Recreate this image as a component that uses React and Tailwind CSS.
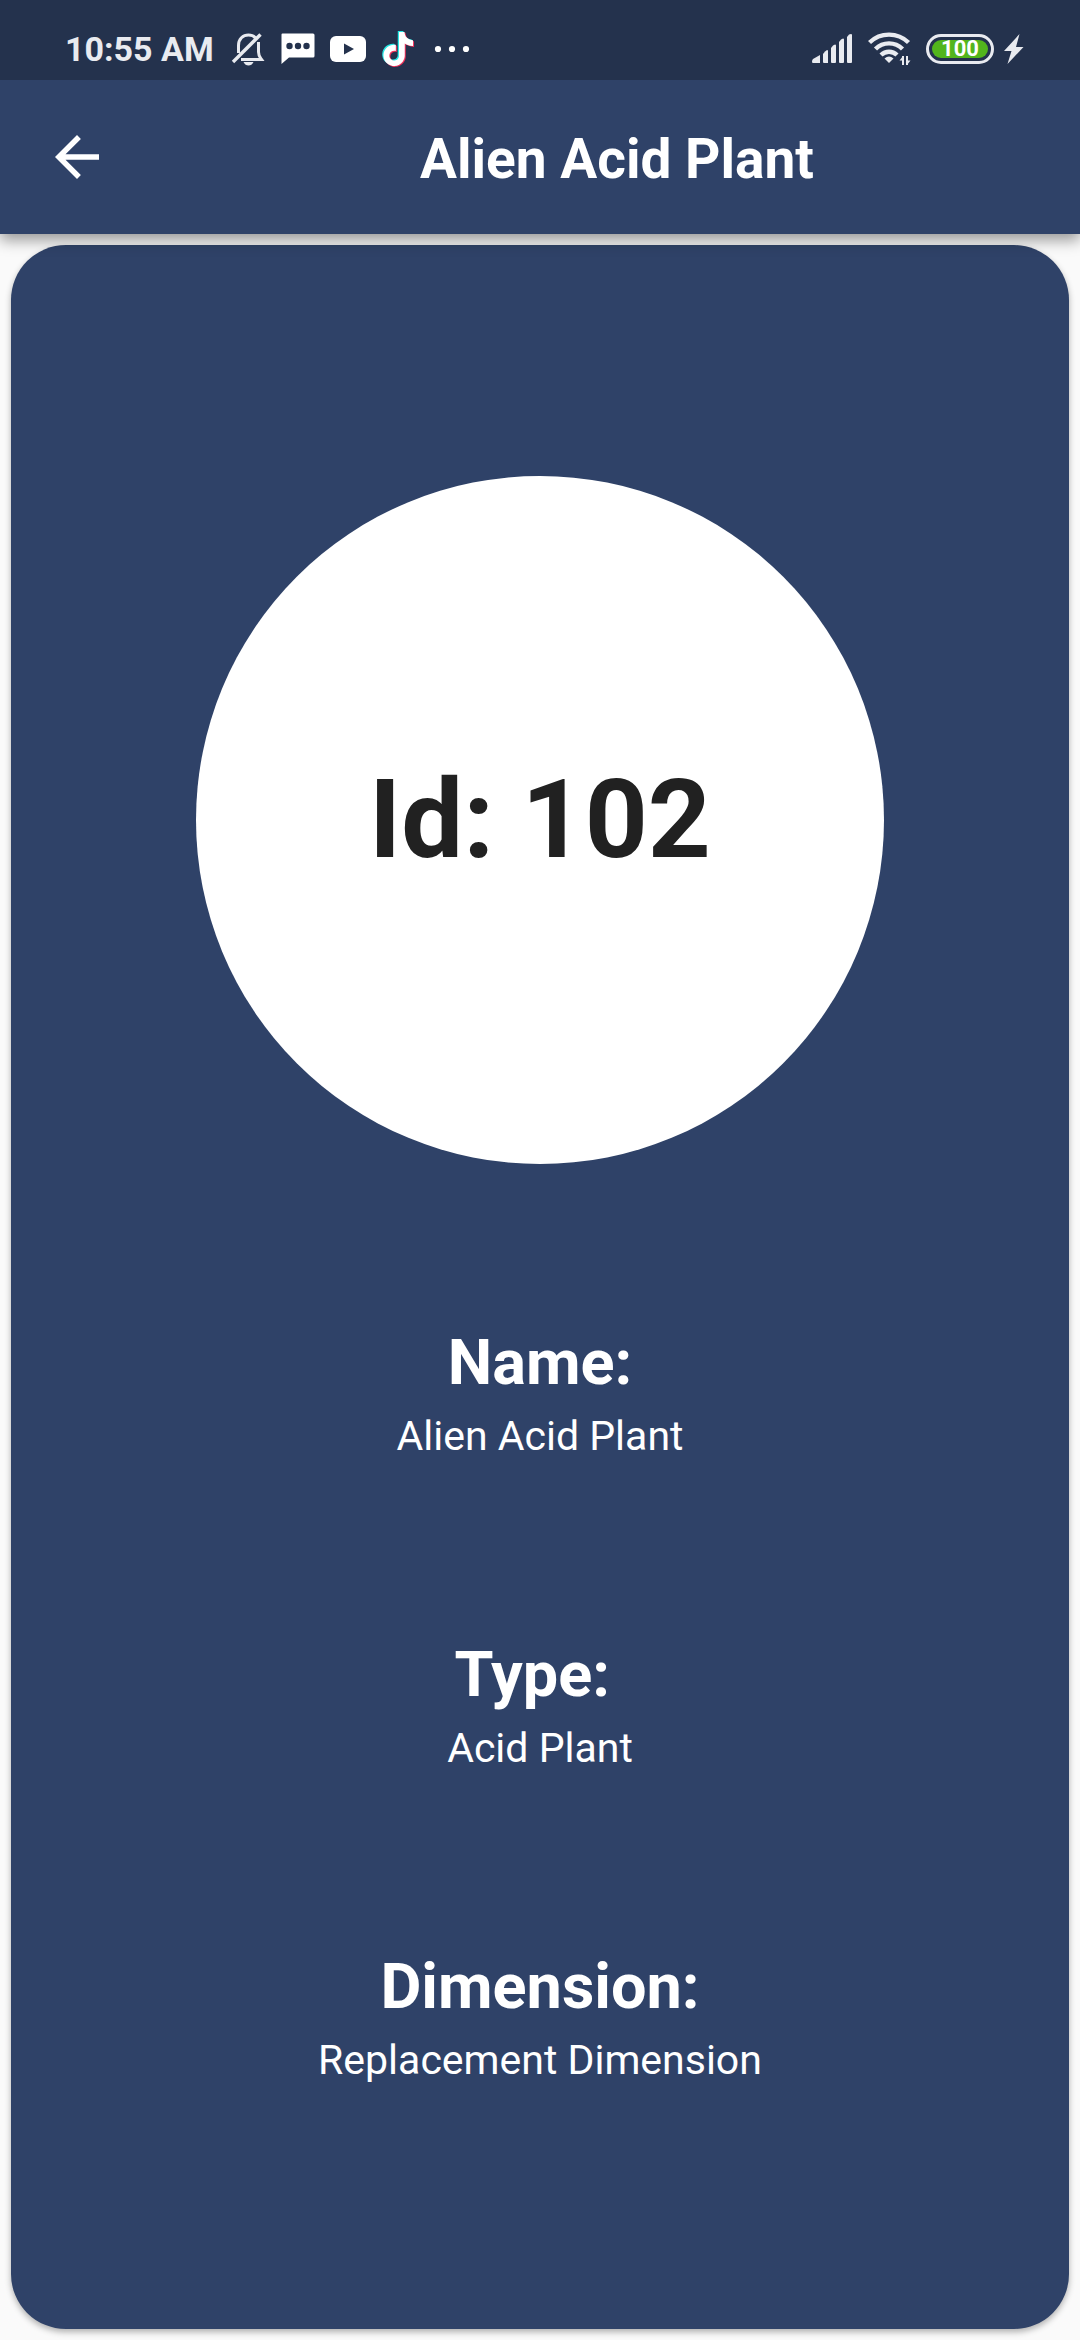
const DETAILS = [
  { label: "Name:", value: "Alien Acid Plant" },
  { label: "Type: ", value: "Acid Plant" },
  { label: "Dimension:", value: "Replacement Dimension" },
];

function BellOff() {
  return (
    <svg className="h-9 w-9" viewBox="0 0 36 36" fill="none" stroke="#e9ebf0" strokeWidth="3">
      <path d="M8.500 22V14.500C8.500 8 13 4 18.500 4C21.500 4 24 5 25.500 7" />
      <path d="M28.500 11V21C28.500 25 30 26.500 31.500 28.500H11" />
      <path d="M3 31L30.500 3.500" strokeWidth="3.400" />
      <path d="M13.500 31h10c-1 2.500-3 3.500-5 3.500s-4-1-5-3.500z" fill="#e9ebf0" stroke="none" />
    </svg>
  );
}

function Chat() {
  return (
    <svg className="h-8 w-[34px]" viewBox="0 0 34 32">
      <path d="M1.500 0.500H32q1.500 0 1.500 1.500V23q0 1.500-1.500 1.500H8L0.500 31V1.500q0-1 1-1z" fill="#fff" />
      <g fill="#24324d">
        <circle cx="8.500" cy="13" r="3.200" />
        <circle cx="17" cy="13" r="3.200" />
        <circle cx="25.500" cy="13" r="3.200" />
      </g>
    </svg>
  );
}

function Video() {
  return (
    <svg className="h-[26px] w-9" viewBox="0 0 36 26">
      <rect width="36" height="26" rx="6" fill="#fff" />
      <path d="M14 7.500V18.500L24 13z" fill="#24324d" />
    </svg>
  );
}

function Note() {
  const d =
    "M12.525.02c1.31-.02 2.61-.01 3.91-.02.08 1.53.63 3.09 1.75 4.17 1.12 1.11 2.7 1.62 4.24 1.79v4.03c-1.44-.05-2.89-.35-4.2-.97-.57-.26-1.100-.59-1.620-.93-.01 2.920.01 5.840-.02 8.750-.08 1.400-.54 2.790-1.350 3.940-1.310 1.920-3.580 3.170-5.910 3.210-1.430.08-2.860-.31-4.080-1.030-2.020-1.190-3.440-3.370-3.650-5.710-.02-.5-.03-1-.01-1.490.18-1.900 1.120-3.720 2.580-4.960 1.660-1.440 3.980-2.130 6.150-1.720.02 1.480-.04 2.960-.04 4.440-.99-.32-2.150-.23-3.020.37-.63.41-1.110 1.040-1.360 1.750-.21.51-.15 1.070-.14 1.610.24 1.640 1.820 3.020 3.500 2.870 1.120-.01 2.190-.66 2.770-1.610.19-.33.4-.67.41-1.060.1-1.790.06-3.570.07-5.360.01-4.030-.01-8.050.02-12.070z";
  return (
    <svg className="h-9 w-[34px]" viewBox="0 0 34 36">
      <path d={d} fill="#25e5e3" transform="translate(-1 0) scale(1.420)" />
      <path d={d} fill="#f5325b" transform="translate(1.200 1.800) scale(1.420)" />
      <path d={d} fill="#fff" transform="translate(0.200 0.900) scale(1.420)" />
    </svg>
  );
}

function Dots() {
  return (
    <svg className="h-2 w-9" viewBox="0 0 36 8" fill="#fff">
      <circle cx="4" cy="4" r="3.100" />
      <circle cx="18" cy="4" r="3.100" />
      <circle cx="32" cy="4" r="3.100" />
    </svg>
  );
}

function Signal() {
  return (
    <svg className="h-[30px] w-10" viewBox="0 0 40 30" fill="#e9ebf0">
      <path d="M1 25L8 21V29H1q-1 0-1-1.500T1 25z" />
      <path d="M11 20l2-2.500 2-1.500q1 0 1 1V29h-4q-1 0-1-1z" />
      <path d="M19 14l2-2.500 2-1q1 0 1 1V28q0 1-1 1h-3q-1 0-1-1z" />
      <path d="M27 8l2-2.500 2-1q1 0 1 1V28q0 1-1 1h-3q-1 0-1-1z" />
      <path d="M35 3l2-2.500 2-.5q1 0 1 1V28q0 1-1 1h-3q-1 0-1-1z" />
    </svg>
  );
}

function Wifi() {
  return (
    <svg className="h-[34px] w-[43px]" viewBox="0 0 43 34" fill="none" stroke="#e9ebf0" strokeWidth="4.400">
      <path d="M1.500 10.500a28 28 0 0 1 39 0" />
      <path d="M7.500 17a19 19 0 0 1 27 0" />
      <path d="M13 23a11.500 11.500 0 0 1 16 0" />
      <path d="M16.500 26.500q4.500-4 9 0L21 31z" fill="#e9ebf0" stroke="none" />
      <path d="M35 24v9M39 24v9" strokeWidth="2" />
      <path d="M31.500 28.500L35 24V28.500zM42.500 28.500L39 33V28.500z" fill="#e9ebf0" stroke="none" />
    </svg>
  );
}

function Bolt() {
  return (
    <svg className="h-[30px] w-5" viewBox="0 0 20 30" fill="#e9ebf0">
      <path d="M15.500 0L0 17h7.500L3.500 30L19.500 13H12z" />
    </svg>
  );
}

function StatusBar() {
  return (
    <div className="flex h-20 items-center justify-between bg-[#24324d] pl-[65px] pr-14 pt-[18px]">
      <div className="flex items-center">
        <span className="text-[34px] font-bold leading-10 text-[#e9ebf0]">10:55 AM</span>
        <div className="ml-4 flex items-center gap-[15px]">
          <BellOff />
          <Chat />
          <Video />
          <Note />
          <div className="ml-1">
            <Dots />
          </div>
        </div>
      </div>
      <div className="flex items-center">
        <Signal />
        <div className="ml-4">
          <Wifi />
        </div>
        <div className="ml-[15px] flex h-[30px] w-[68px] rounded-full border-3 border-[#e9ebf0] p-[3px]">
          <div className="flex flex-1 items-center justify-center rounded-full bg-[#52b51c] text-[22px] font-bold leading-none text-white">
            100
          </div>
        </div>
        <div className="ml-2.5">
          <Bolt />
        </div>
      </div>
    </div>
  );
}

export default function App() {
  return (
    <div className="flex min-h-screen flex-col bg-[#fafafa] font-['Roboto',sans-serif]">
      <header className="relative z-10 bg-[#2f4268] shadow-[0_6px_14px_rgba(0,0,0,0.4)]">
        <StatusBar />
        <div className="flex h-[154px] items-center">
          <button type="button" aria-label="Back" className="flex h-full w-[154px] items-center justify-center">
            <svg className="h-[66px] w-[66px]" viewBox="0 0 24 24" fill="#fff">
              <path d="M20 11H7.830l5.590-5.590L12 4l-8 8 8 8 1.410-1.410L7.830 13H20v-2z" />
            </svg>
          </button>
          <h1 className="flex-1 pt-1 text-center text-[55px] font-bold leading-16 text-white">Alien Acid Plant</h1>
        </div>
      </header>
      <main className="m-[11px] flex flex-1 flex-col items-center rounded-[55px] bg-[#2f4268] pt-[231px] shadow-[0_3px_6px_rgba(0,0,0,0.3)]">
        <div className="flex size-[688px] items-center justify-center rounded-full bg-white">
          <p className="text-[110px] font-bold leading-32 text-[#212121]">Id: 102</p>
        </div>
        <dl className="mt-[161px] flex flex-col gap-[177px] pb-20 text-center text-white">
          {DETAILS.map(({ label, value }) => (
            <div key={label} className="flex flex-col gap-3">
              <dt className="whitespace-pre text-[63px] font-bold leading-[75px]">{label}</dt>
              <dd className="text-[41px] leading-12">{value}</dd>
            </div>
          ))}
        </dl>
      </main>
    </div>
  );
}
